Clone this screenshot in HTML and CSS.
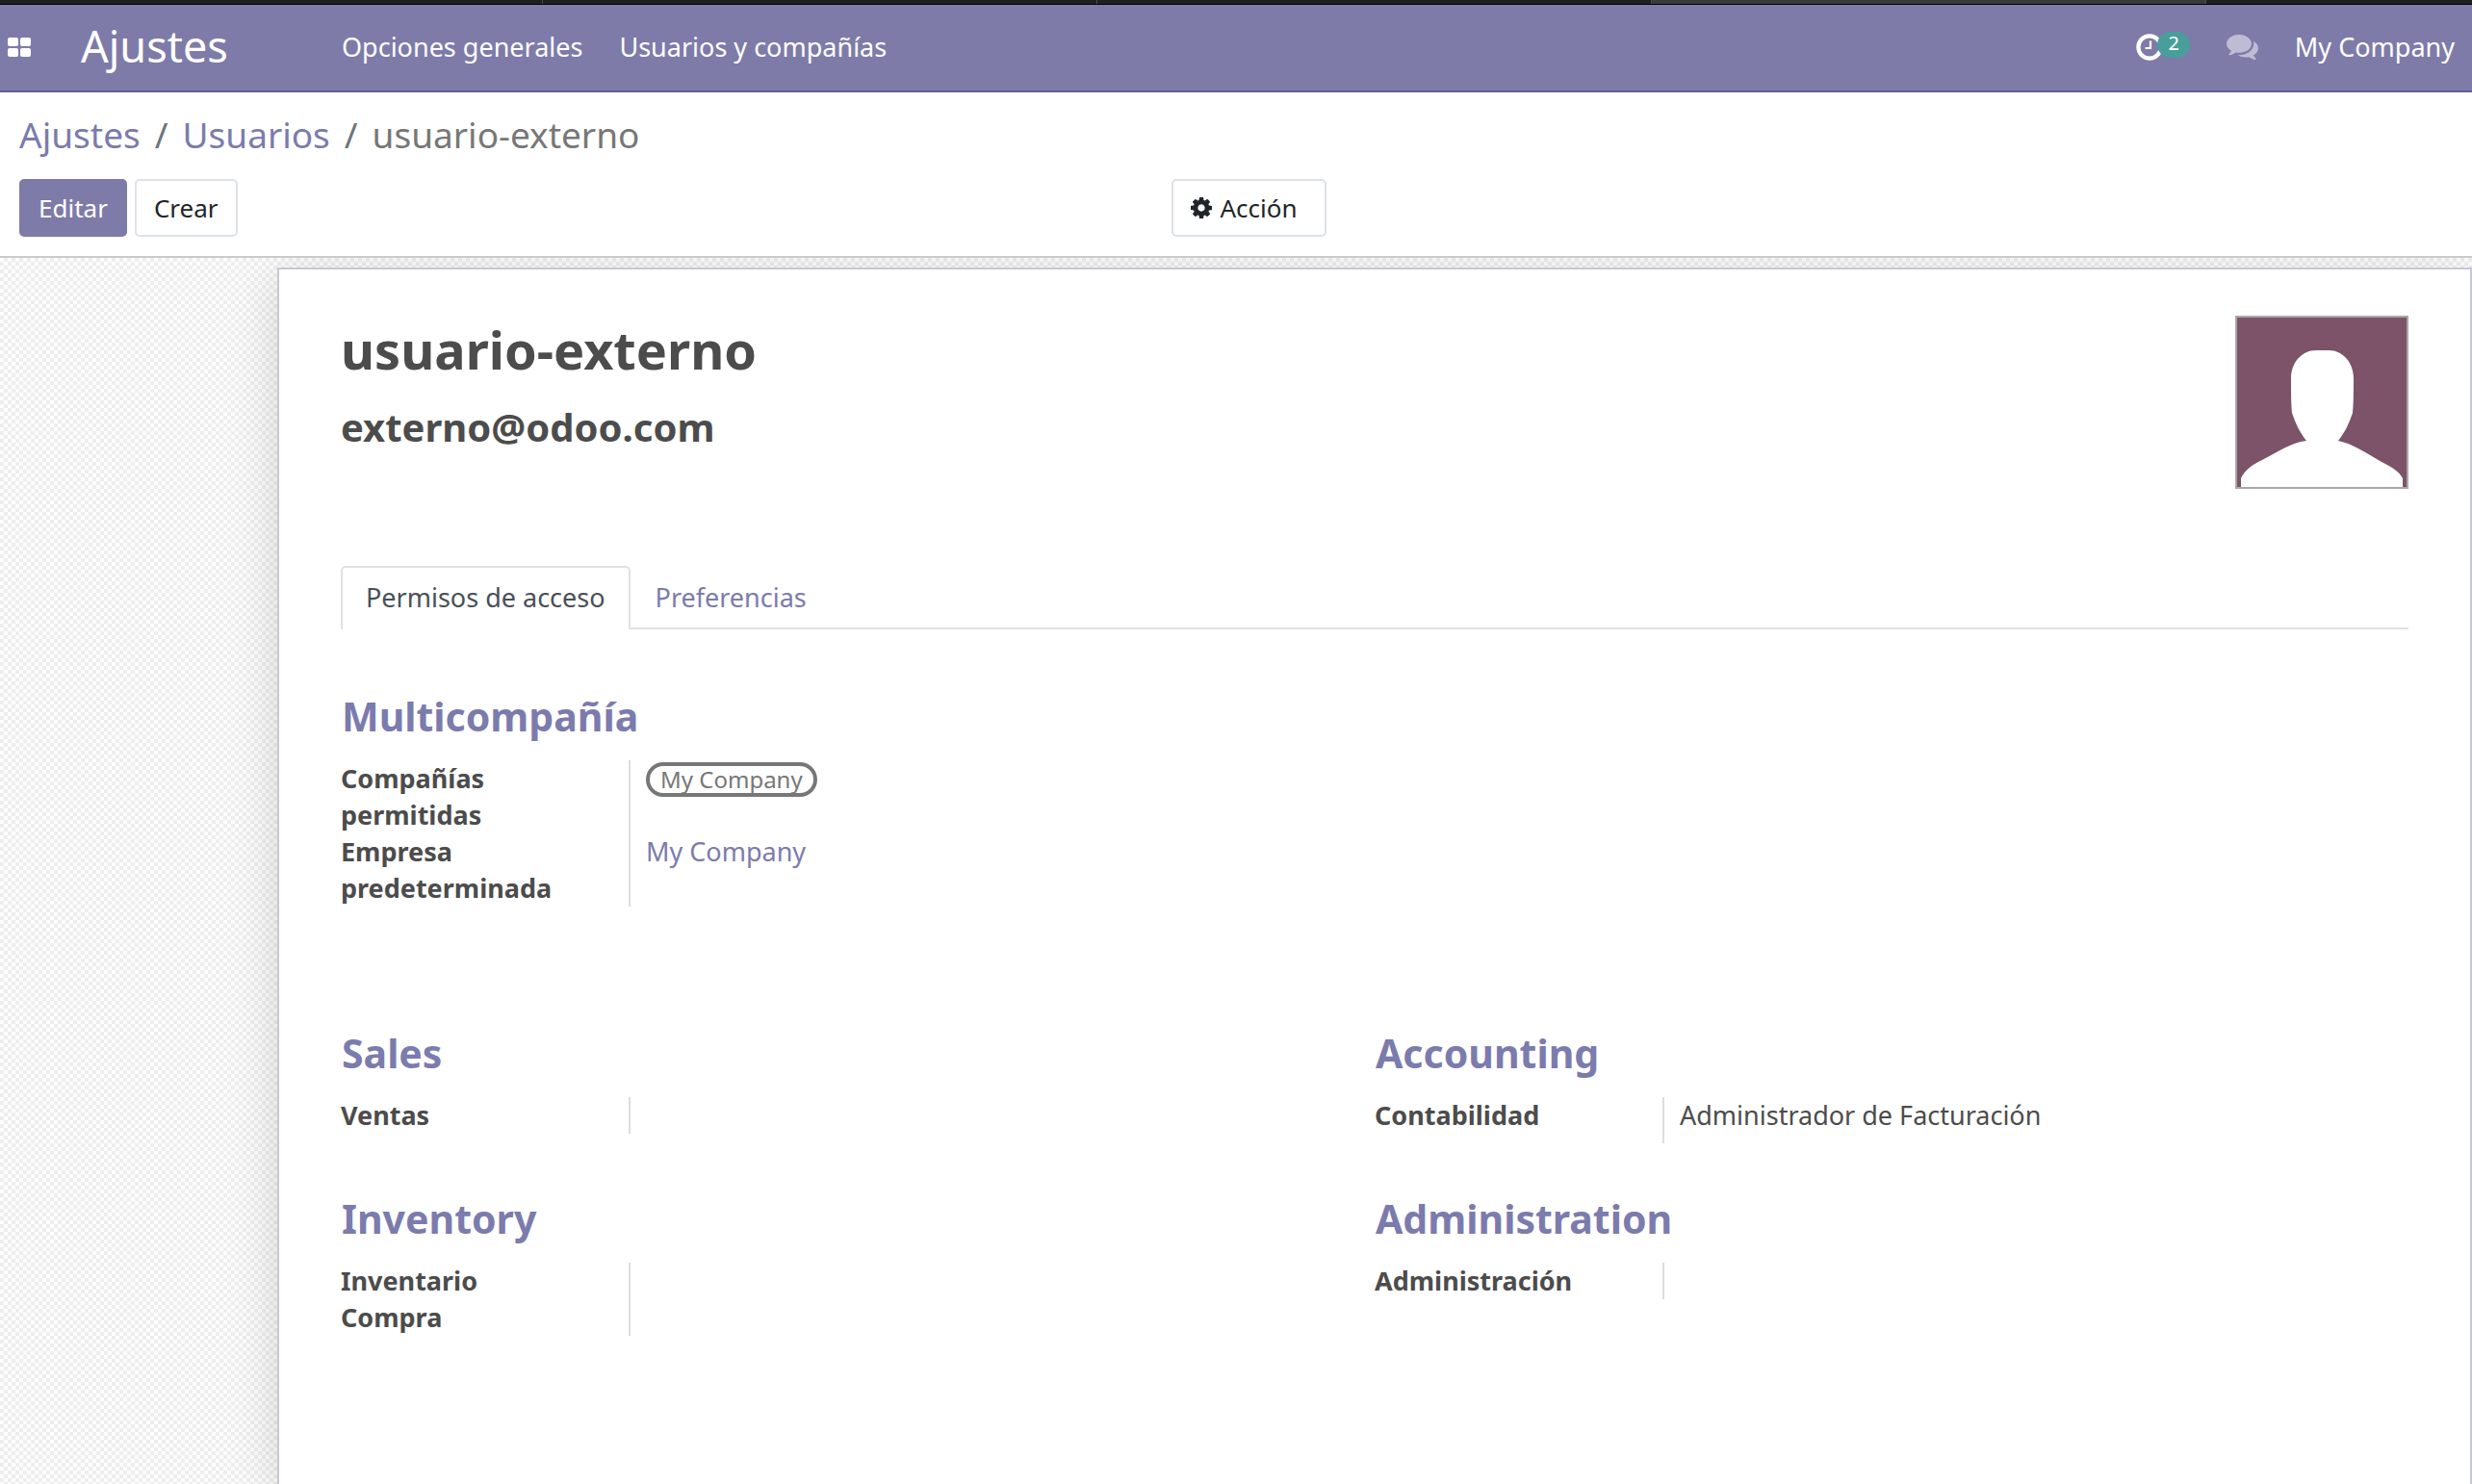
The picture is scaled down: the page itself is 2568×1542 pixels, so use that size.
FILE: index.html
```html
<!DOCTYPE html>
<html lang="es">
<head>
<meta charset="utf-8">
<title>usuario-externo - Ajustes</title>
<link rel="stylesheet" href="styles.css">
</head>
<body>
<div class="browser-strip" aria-hidden="true">
  <span class="strip-tab"></span><span class="strip-tab"></span><span class="strip-tab"></span><span class="strip-tab strip-tab-active"></span><span class="strip-tab"></span>
</div>

<header class="navbar">
  <button class="apps" type="button" aria-label="Aplicaciones">
    <svg width="24" height="20" viewBox="0 0 24 20" fill="currentColor"><rect width="11" height="9" rx="2"/><rect x="13" width="11" height="9" rx="2"/><rect y="11" width="11" height="9" rx="2"/><rect x="13" y="11" width="11" height="9" rx="2"/></svg>
  </button>
  <a class="brand" href="#">Ajustes</a>
  <nav class="menu">
    <a href="#">Opciones generales</a>
    <a href="#">Usuarios y compañías</a>
  </nav>
  <div class="systray">
    <button class="tray-button activities" type="button" aria-label="Actividades">
      <svg width="28" height="28" viewBox="0 0 28 28" fill="none" stroke="currentColor"><circle cx="14" cy="14" r="11.6" stroke-width="4.2"/><path d="M15 7.5V15H9.5" stroke-width="2.2"/></svg>
      <span class="badge">2</span>
    </button>
    <button class="tray-button messages" type="button" aria-label="Conversaciones">
      <svg width="33" height="26" viewBox="0 0 1792 1412" fill="currentColor"><path d="M1408 512q0 139-94 257t-256.500 186.500-353.500 68.500q-86 0-176-16-124 88-278 128-36 9-86 16h-3q-11 0-20.500-8t-11.500-21q-1-3-1-6.500t.5-6.500 2-6l2.500-5 3.500-5.500 4-5 4.500-5 4-4.500q5-6 23-25t26-29.500 22.500-29 25-38.500 20.500-44q-124-72-195-177t-71-224q0-139 94-257t256.500-186.500 353.500-68.500 353.500 68.500 256.500 186.500 94 257zm384 256q0 120-71 224.500t-195 176.500q10 24 20.500 44t25 38.500 22.500 29 26 29.500 23 25q1 1 4 4.500t4.500 5 4 5 3.500 5.500l2.500 5 2 6 .5 6.500-1 6.500q-3 14-13 22t-22 7q-50-7-86-16-154-40-278-128-90 16-176 16-271 0-472-132 58 4 88 4 161 0 309-45t264-129q125-92 192-212t67-254q0-77-23-152 129 71 204 178t75 230z"/></svg>
    </button>
    <button class="tray-button company" type="button">My Company</button>
  </div>
</header>

<section class="control-panel">
  <nav class="breadcrumb" aria-label="Ruta">
    <a href="#">Ajustes</a><span class="slash">/</span><a href="#">Usuarios</a><span class="slash">/</span><span class="current">usuario-externo</span>
  </nav>
  <div class="toolbar">
    <div class="buttons">
      <button class="btn btn-primary" type="button">Editar</button>
      <button class="btn" type="button">Crear</button>
    </div>
    <div class="buttons">
      <button class="btn btn-action" type="button">
        <svg width="22" height="22" viewBox="0 0 1536 1536" fill="currentColor"><path d="M1024 768q0-106-75-181t-181-75-181 75-75 181 75 181 181 75 181-75 75-181zm512-109v222q0 12-8 23t-20 13l-185 28q-19 54-39 91 35 50 107 138 10 12 10 25t-9 23q-27 37-99 108t-94 71q-12 0-26-9l-138-108q-44 23-91 38-16 136-29 186-7 28-36 28h-222q-14 0-24.500-8.500t-11.500-21.500l-28-184q-49-16-90-37l-141 107q-10 9-25 9-14 0-25-11-126-114-165-168-7-10-7-23 0-12 8-23 15-21 51-66.500t54-70.500q-27-50-41-99l-183-27q-13-2-21-12.500t-8-23.500v-222q0-12 8-23t19-13l186-28q14-46 39-92-40-57-107-138-10-12-10-24 0-10 9-23 26-36 98.500-107.500t94.500-71.500q13 0 26 10l138 107q44-23 91-38 16-136 29-186 7-28 36-28h222q14 0 24.500 8.500t11.500 21.500l28 184q49 16 90 37l142-107q9-9 24-9 13 0 25 10 129 119 165 170 7 8 7 22 0 12-8 23-15 21-51 66.500t-54 70.500q26 50 41 98l183 28q13 2 21 12.500t8 23.500z"/></svg>
        Acción
      </button>
    </div>
  </div>
</section>

<main class="content">
  <article class="sheet">
    <div class="profile">
      <div>
        <h1>usuario-externo</h1>
        <h2>externo@odoo.com</h2>
      </div>
      <svg class="avatar" viewBox="0 0 176 176" role="img" aria-label="Avatar"><path fill="#7c5368" d="M0 0h176v176H0z"/><path fill="#fff" d="M4 176v-9c4-9 12-14 20-18 20-10 31-19 48-21-7-9-11-17-15-29-1-10-1-24-1-36 0-16 11-29 26-29h13c15 0 26 13 26 29 0 12 0 26-1 36-4 12-8 20-15 29 15 3 28 12 45 22 8 4 18 9 22 17v9z"/></svg>
    </div>

    <div class="tabs" role="tablist">
      <button class="tab tab-active" type="button" role="tab" aria-selected="true">Permisos de acceso</button>
      <button class="tab" type="button" role="tab" aria-selected="false">Preferencias</button>
    </div>

    <section class="group group-company">
      <h3>Multicompañía</h3>
      <div class="field"><div class="label">Compañías permitidas</div><div class="value"><span class="tag">My Company</span></div></div>
      <div class="field"><div class="label">Empresa predeterminada</div><div class="value"><a href="#">My Company</a></div></div>
    </section>

    <div class="groups">
      <section class="group">
        <h3>Sales</h3>
        <div class="field"><div class="label">Ventas</div><div class="value"></div></div>
      </section>
      <section class="group">
        <h3>Accounting</h3>
        <div class="field field-filled"><div class="label">Contabilidad</div><div class="value">Administrador de Facturación</div></div>
      </section>
      <section class="group">
        <h3>Inventory</h3>
        <div class="field"><div class="label">Inventario</div><div class="value"></div></div>
        <div class="field"><div class="label">Compra</div><div class="value"></div></div>
      </section>
      <section class="group">
        <h3>Administration</h3>
        <div class="field"><div class="label">Administración</div><div class="value"></div></div>
      </section>
    </div>
  </article>
</main>
</body>
</html>
```
FILE: styles.css
```css
* { box-sizing: border-box; }

body {
  display: flex;
  flex-direction: column;
  min-height: 100vh;
  margin: 0;
  background: #fff;
  color: #4c4c4c;
  font: 27px/38px "Noto Sans", "Open Sans", sans-serif;
}

a { color: #7c7bad; text-decoration: none; }

button {
  margin: 0;
  padding: 0;
  border: 0;
  background: none;
  color: inherit;
  font: inherit;
  cursor: pointer;
}

h1, h2, h3 { margin: 0; font-weight: 700; }

svg { display: block; flex: none; }

/* Browser edge above the page */
.browser-strip {
  display: grid;
  grid-template-columns: 564px repeat(3, 576px) 1fr;
  height: 5px;
  border-bottom: 1px solid #000;
  background: #1e201f;
}

.strip-tab { border-right: 1px solid #4a4a4a; }
.strip-tab:last-child { border-right: 0; }
.strip-tab-active { background: #3a3a3a; }

/* Main bar */
.navbar {
  display: flex;
  align-items: center;
  height: 91px;
  padding: 0 18px 2px 8px;
  border-bottom: 2px solid #5f5e97;
  background: #7e7ba9;
  color: #fff;
}

.navbar a { color: #fff; }

.brand {
  width: 271px;
  margin-left: 52px;
  padding-bottom: 2px;
  font-size: 45px;
  line-height: 60px;
}

.menu { display: flex; gap: 38px; }

.systray {
  display: flex;
  align-items: center;
  gap: 38px;
  margin-left: auto;
}

.activities { display: flex; align-items: center; }

.badge {
  height: 27px;
  margin: 0 0 4px -6px;
  padding: 0 11px;
  border-radius: 14px;
  background: #489e9b;
  font-size: 20px;
  line-height: 23px;
}

.messages { color: #bebcd4; }

/* Breadcrumb and buttons */
.control-panel {
  padding: 16px 20px 20px;
  border-bottom: 2px solid #cacaca;
  background: #fff;
}

.breadcrumb {
  display: flex;
  margin-bottom: 18px;
  color: #777;
  font-size: 37px;
  line-height: 56px;
}

.slash { padding: 0 15px; color: #6c757d; }

.toolbar { display: grid; grid-template-columns: 9fr 10fr; }

.buttons { display: flex; gap: 8px; }

.btn {
  display: flex;
  align-items: center;
  height: 60px;
  padding: 0 18px;
  border: 2px solid #dee2e6;
  border-radius: 5px;
  background: #fff;
  color: #212529;
  font-size: 26px;
}

.btn-primary { border-color: #7e7ba9; background: #7e7ba9; color: #fff; }

.btn-action { gap: 8px; padding-right: 28px; }

/* Form */
.content {
  display: flex;
  flex: 1;
  overflow: hidden;
  padding: 10px 0 0 288px;
  background: repeating-conic-gradient(#eee 0 25%, #fdfdfd 0 50%) 0 0 / 8px 8px;
}

.sheet {
  flex: 1;
  padding: 48px 64px;
  border: 2px solid #c8c8d3;
  border-bottom: 0;
  background: #fff;
  box-shadow: 0 10px 50px rgba(0, 0, 0, .15);
}

.profile {
  display: flex;
  justify-content: space-between;
  margin-bottom: 80px;
}

h1 { margin-bottom: 16px; font-size: 54px; line-height: 70px; }

h2 { font-size: 40px; line-height: 60px; }

.avatar {
  width: 180px;
  height: 180px;
  border: 2px solid #a8a8a8;
}

.tabs {
  display: flex;
  border-bottom: 2px solid #dee2e6;
}

.tab {
  margin-bottom: -2px;
  padding: 12px 24px 14px;
  border: 2px solid transparent;
  border-bottom: 0;
  border-radius: 5px 5px 0 0;
  color: #7c7bad;
}

.tab-active {
  border-color: #dee2e6;
  background: #fff;
  color: #495057;
}

h3 {
  margin-bottom: 22px;
  padding-left: 1px;
  color: #7c7bad;
  font-size: 41px;
  line-height: 48px;
}

.group-company { margin: 66px 0 128px; }

.groups {
  display: grid;
  grid-template-columns: 1fr 1fr;
  gap: 54px 0;
}

.field { display: flex; }

.label {
  width: 301px;
  padding-right: 60px;
  border-right: 2px solid #ddd;
  font-weight: 700;
}

.value { padding-left: 16px; }

.field-filled { min-height: 48px; }

.tag {
  display: block;
  margin-top: 2px;
  padding: 0 11px;
  border: 4px solid #777;
  border-radius: 18px;
  color: #777;
  font-size: 24px;
  line-height: 28px;
}
```
